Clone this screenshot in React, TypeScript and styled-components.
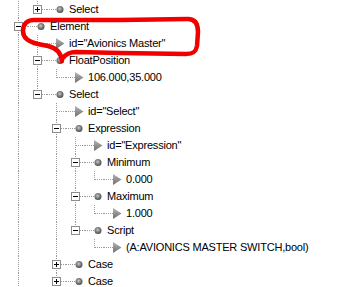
import React from "react";
import styled, { createGlobalStyle } from "styled-components";

const GlobalStyle = createGlobalStyle`
  html, body {
    margin: 0;
    padding: 0;
    background: #fff;
  }
`;

const LINE = "#9a9a9a";

type Item = {
  level: number;
  label: string;
  leaf?: boolean;
  open?: boolean;
  last?: boolean;
  guides: boolean[]; // ancestor columns that keep a vertical line
};

const rows: Item[] = [
  { level: 1, label: "Select", open: false, last: true, guides: [true] },
  { level: 0, label: "Element", open: true, guides: [] },
  { level: 1, label: 'id="Avionics Master"', leaf: true, guides: [true] },
  { level: 1, label: "FloatPosition", open: true, guides: [true] },
  { level: 2, label: "106.000,35.000", leaf: true, last: true, guides: [true, true] },
  { level: 1, label: "Select", open: true, last: true, guides: [true] },
  { level: 2, label: 'id="Select"', leaf: true, guides: [true, false] },
  { level: 2, label: "Expression", open: true, guides: [true, false] },
  { level: 3, label: 'id="Expression"', leaf: true, guides: [true, false, true] },
  { level: 3, label: "Minimum", open: true, guides: [true, false, true] },
  { level: 4, label: "0.000", leaf: true, last: true, guides: [true, false, true, true] },
  { level: 3, label: "Maximum", open: true, guides: [true, false, true] },
  { level: 4, label: "1.000", leaf: true, last: true, guides: [true, false, true, true] },
  { level: 3, label: "Script", open: true, last: true, guides: [true, false, true] },
  {
    level: 4,
    label: "(A:AVIONICS MASTER SWITCH,bool)",
    leaf: true,
    last: true,
    guides: [true, false, true, false],
  },
  { level: 2, label: "Case", open: false, guides: [true, false] },
  { level: 2, label: "Case", open: false, guides: [true, false] },
];

const vDots = (h: string) =>
  `repeating-linear-gradient(to bottom, ${LINE} 0 1px, transparent 1px 2px) 9px 0 / 1px ${h} no-repeat`;
const hDots = (x: string, w: string) =>
  `repeating-linear-gradient(to right, ${LINE} 0 1px, transparent 1px 2px) ${x} 8px / ${w} 1px no-repeat`;

const Frame = styled.div`
  position: relative;
  width: 347px;
  height: 287px;
  overflow: hidden;
  background: #fff;
  font-family: "Liberation Sans", Arial, sans-serif;
  font-size: 11px;
  color: #000;
`;

const Tree = styled.ul`
  list-style: none;
  margin: 0;
  padding: 1px 0 0 9px;
`;

const Row = styled.li`
  display: flex;
  height: 17px;
`;

const Guide = styled.span<{ $on: boolean }>`
  flex: 0 0 19px;
  background: ${(p) => (p.$on ? vDots("100%") : "none")};
`;

const Connector = styled.span<{ $last?: boolean }>`
  flex: 0 0 19px;
  display: flex;
  align-items: flex-start;
  padding: 4px 0 0 5px;
  box-sizing: border-box;
  background: ${(p) => vDots(p.$last ? "9px" : "100%")}, ${hDots("10px", "9px")};
`;

const Expander = styled.span<{ $open?: boolean }>`
  width: 9px;
  height: 9px;
  box-sizing: border-box;
  border: 1px solid #8c8c8c;
  background: linear-gradient(#000, #000) 1px 3px / 5px 1px no-repeat,
    ${(p) => (p.$open ? "" : "linear-gradient(#000, #000) 3px 1px / 1px 5px no-repeat,")} #fff;
`;

const IconCell = styled.span`
  flex: 0 0 22px;
  height: 17px;
  background: ${hDots("0px", "9px")};
  svg {
    display: block;
  }
`;

const Label = styled.span`
  line-height: 17px;
  white-space: nowrap;
  letter-spacing: -0.2px;
`;

const Marker = styled.svg`
  position: absolute;
  left: 0;
  top: 0;
  pointer-events: none;
`;

function NodeIcon({ leaf }: { leaf?: boolean }) {
  if (leaf) {
    return (
      <svg width="22" height="17" viewBox="0 0 22 17">
        <defs>
          <linearGradient id="tri" x1="0" y1="0" x2="0" y2="1">
            <stop offset="0" stopColor="#b4b4b4" />
            <stop offset="1" stopColor="#6e6e6e" />
          </linearGradient>
        </defs>
        <polygon points="9,3 17.5,8.5 9,14" fill="url(#tri)" />
      </svg>
    );
  }
  return (
    <svg width="22" height="17" viewBox="0 0 22 17">
      <defs>
        <radialGradient id="ball" cx="0.45" cy="0.4" r="0.6">
          <stop offset="0" stopColor="#c9c9c9" />
          <stop offset="0.55" stopColor="#7c7c7c" />
          <stop offset="1" stopColor="#4e4e4e" />
        </radialGradient>
      </defs>
      <circle cx="13" cy="8.5" r="3.5" fill="url(#ball)" />
    </svg>
  );
}

export default function App() {
  return (
    <Frame>
      <GlobalStyle />
      <Tree>
        {rows.map((r, i) => (
          <Row key={i}>
            {r.guides.map((g, k) => (
              <Guide key={k} $on={g} />
            ))}
            <Connector $last={r.last}>
              {!r.leaf && <Expander $open={r.open} />}
            </Connector>
            <IconCell>
              <NodeIcon leaf={r.leaf} />
            </IconCell>
            <Label>{r.label}</Label>
          </Row>
        ))}
      </Tree>
      <Marker width="347" height="287" viewBox="0 0 347 287">
        <path
          d="M62 61 C61 53 57 48 48 46 L38 44 C29 42 23 38 23 31 C23 24 27 20 34 20 L120 20 L188 19 C195 19 198 24 198 32 L197 46 C196 52 193 54 186 54 L120 53 L76 52 C70 52 66 54 63 58"
          fill="none"
          stroke="#f20000"
          strokeWidth="4.5"
          strokeLinecap="round"
          strokeLinejoin="round"
        />
      </Marker>
    </Frame>
  );
}
